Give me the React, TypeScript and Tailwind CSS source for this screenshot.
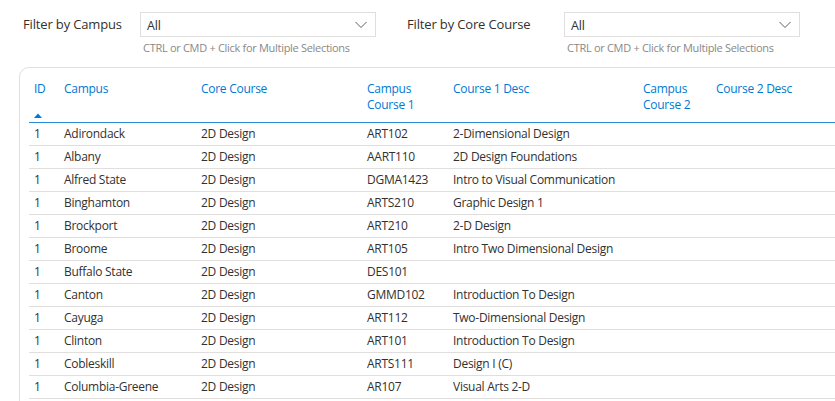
import React from 'react';

const rows = [
  ['Adirondack', 'ART102', '2-Dimensional Design'],
  ['Albany', 'AART110', '2D Design Foundations'],
  ['Alfred State', 'DGMA1423', 'Intro to Visual Communication'],
  ['Binghamton', 'ARTS210', 'Graphic Design 1'],
  ['Brockport', 'ART210', '2-D Design'],
  ['Broome', 'ART105', 'Intro Two Dimensional Design'],
  ['Buffalo State', 'DES101', ''],
  ['Canton', 'GMMD102', 'Introduction To Design'],
  ['Cayuga', 'ART112', 'Two-Dimensional Design'],
  ['Clinton', 'ART101', 'Introduction To Design'],
  ['Cobleskill', 'ARTS111', 'Design I (C)'],
  ['Columbia-Greene', 'AR107', 'Visual Arts 2-D'],
];

function Filter({ label, labelW }: { label: string; labelW: string }) {
  return (
    <div className="flex items-start">
      <div className={`${labelW} pt-[3px] text-[13px] tracking-[-0.15px] text-[#323130]`}>{label}</div>
      <div>
        <div className="w-[236px] h-[25px] border border-[#e1dfdd] flex items-center justify-between pl-[6px] pr-[8px] text-[12.5px] tracking-[-0.2px] text-[#323130]">
          <span className="pt-[4px]">All</span>
          <svg width="12" height="8" viewBox="0 0 12 8" fill="none">
            <path d="M0.5 1 L6 6.5 L11.5 1" stroke="#605e5c" strokeWidth="1" />
          </svg>
        </div>
        <div className="pl-[3px] pt-[3px] text-[11px] tracking-[-0.3px] text-[#8a8886]">CTRL or CMD + Click for Multiple Selections</div>
      </div>
    </div>
  );
}

export default function App() {
  return (
    <div className="w-[835px] h-[401px] overflow-hidden bg-white" style={{ fontFamily: '"Open Sans", sans-serif' }}>
      <div className="flex pl-[23px] pt-[12px] gap-[31px]">
        <Filter label="Filter by Campus" labelW="w-[117px]" />
        <Filter label="Filter by Core Course" labelW="w-[157px]" />
      </div>
      <div className="ml-[19px] mt-[10px] w-[900px] min-h-[400px] border border-[#e1dfdd] rounded-[10px] pl-[9px] pt-[7px]">
        <table className="border-collapse text-[12px] tracking-[-0.27px] text-left">
          <thead>
            <tr className="border-b border-[#2b88d8] text-[#0078d4] align-top">
              <th className="w-[30px] font-normal pl-[5px] pt-[6px] pb-[4px]">
                <div className="leading-[16px]">ID</div>
                <svg className="mt-[16px] block" width="8" height="5" viewBox="0 0 8 5">
                  <path d="M0 5 L4 0.5 L8 5 Z" fill="#0078d4" />
                </svg>
              </th>
              <th className="w-[137px] font-normal pl-[5px] pt-[6px] leading-[16px]">Campus</th>
              <th className="w-[166px] font-normal pl-[5px] pt-[6px] leading-[16px]">Core Course</th>
              <th className="w-[86px] font-normal pl-[5px] pt-[6px] leading-[16px]">Campus<br />Course 1</th>
              <th className="w-[190px] font-normal pl-[5px] pt-[6px] leading-[16px]">Course 1 Desc</th>
              <th className="w-[73px] font-normal pl-[5px] pt-[6px] leading-[16px]">Campus<br />Course 2</th>
              <th className="w-[200px] font-normal pl-[5px] pt-[6px] leading-[16px]">Course 2 Desc</th>
            </tr>
          </thead>
          <tbody className="text-[#323130]">
            {rows.map(r => (
              <tr key={r[0]} className="border-b border-[#e1dfdd] h-[23px]">
                <td className="pl-[5px]">1</td>
                <td className="pl-[5px]">{r[0]}</td>
                <td className="pl-[5px]">2D Design</td>
                <td className="pl-[5px]">{r[1]}</td>
                <td className="pl-[5px]">{r[2]}</td>
                <td className="pl-[5px]"></td>
                <td className="pl-[5px]"></td>
              </tr>
            ))}
          </tbody>
        </table>
      </div>
    </div>
  );
}
